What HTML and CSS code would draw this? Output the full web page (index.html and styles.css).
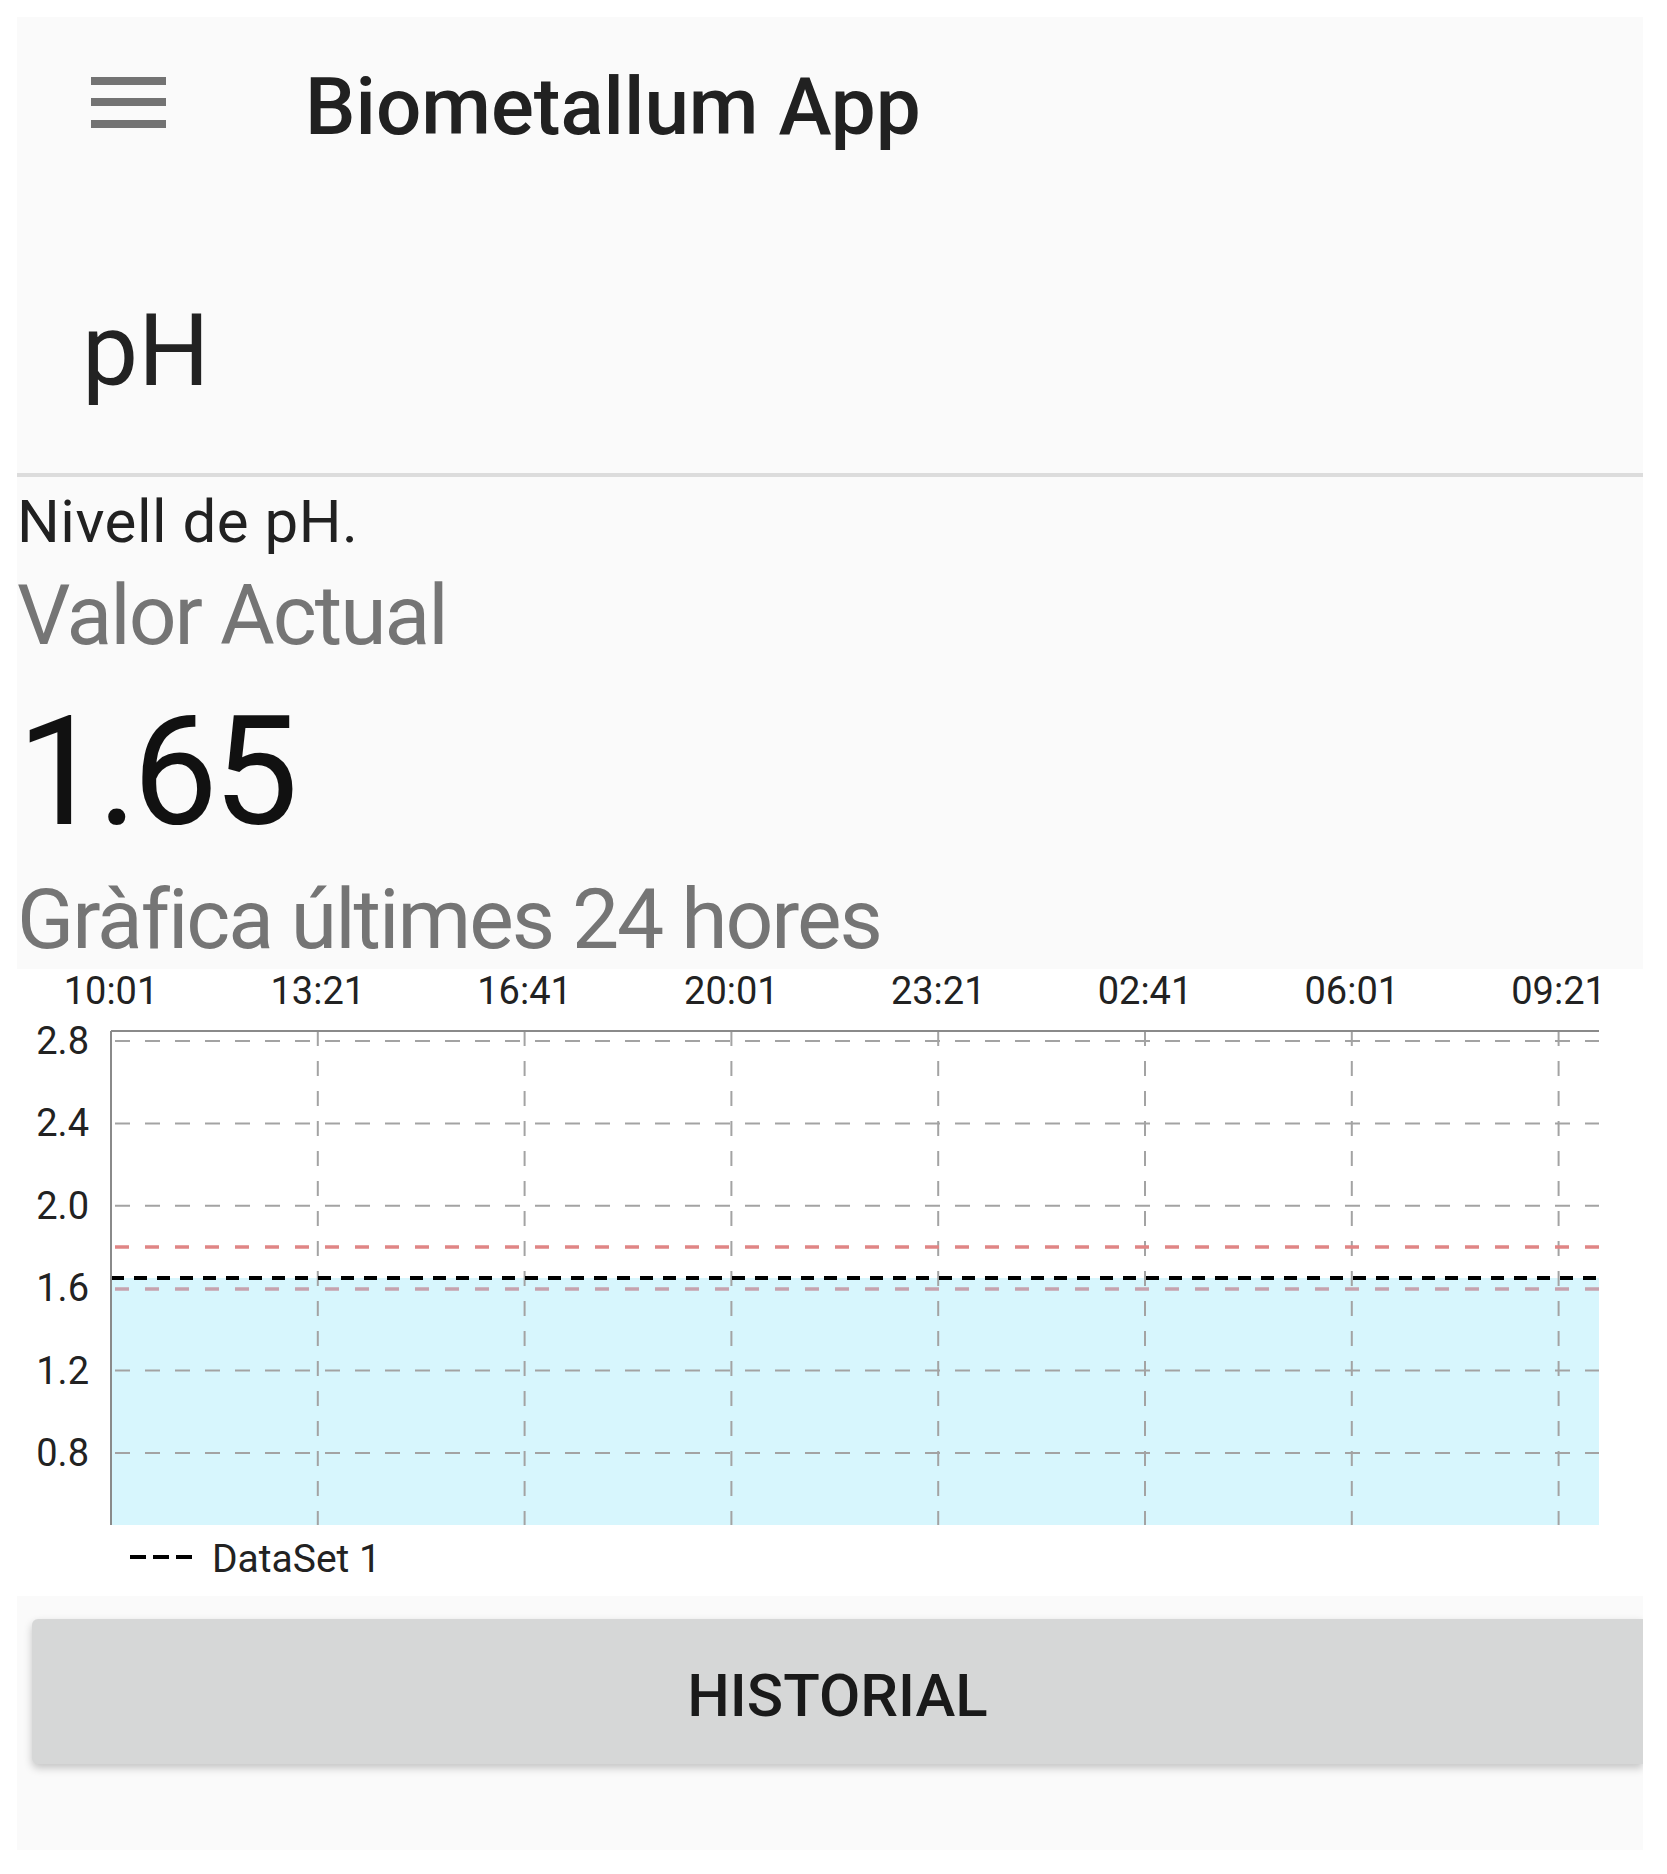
FILE: index.html
```html
<!DOCTYPE html>
<html lang="ca">
<head>
    <meta charset="UTF-8">
    <meta name="viewport" content="width=device-width, initial-scale=1.0">
    <title>Biometallum App</title>
    <link rel="stylesheet" href="styles.css">
</head>
<body>
    <div class="screen">
        <div class="toolbar">
            <svg class="menu-icon" width="75" height="51" viewBox="0 0 75 51">
                <rect x="0" y="0" width="75" height="8" fill="#737373"/>
                <rect x="0" y="21" width="75" height="8" fill="#737373"/>
                <rect x="0" y="43" width="75" height="8" fill="#737373"/>
            </svg>
            <div class="app-title">Biometallum App</div>
        </div>
        <div class="page-title">pH</div>
        <div class="divider"></div>
        <div class="info">
            <div class="description">Nivell de pH.</div>
            <div class="label">Valor Actual</div>
            <div class="value">1.65</div>
            <div class="label">Gràfica últimes 24 hores</div>
        </div>
        <div class="chart">
            <svg width="1626" height="627" viewBox="0 0 1626 627">
                <!-- area under the data set -->
                <rect x="94" y="309" width="1488" height="247" fill="#d7f6fd"/>
                <!-- horizontal grid -->
                <g stroke="#a3a3a3" stroke-width="2" stroke-dasharray="15 15">
                    <line x1="98" y1="72" x2="1582" y2="72"/>
                    <line x1="98" y1="154.4" x2="1582" y2="154.4"/>
                    <line x1="98" y1="236.8" x2="1582" y2="236.8"/>
                    <line x1="98" y1="401.6" x2="1582" y2="401.6"/>
                    <line x1="98" y1="484" x2="1582" y2="484"/>
                </g>
                <!-- vertical grid -->
                <g stroke="#a3a3a3" stroke-width="2" stroke-dasharray="15 15">
                    <line x1="300.8" y1="62" x2="300.8" y2="556"/>
                    <line x1="507.6" y1="62" x2="507.6" y2="556"/>
                    <line x1="714.4" y1="62" x2="714.4" y2="556"/>
                    <line x1="921.2" y1="62" x2="921.2" y2="556"/>
                    <line x1="1128" y1="62" x2="1128" y2="556"/>
                    <line x1="1334.8" y1="62" x2="1334.8" y2="556"/>
                    <line x1="1541.6" y1="62" x2="1541.6" y2="556"/>
                </g>
                <!-- limit lines -->
                <line x1="98" y1="278" x2="1582" y2="278" stroke="#e08585" stroke-width="3.5" stroke-dasharray="14 16"/>
                <line x1="98" y1="320" x2="1582" y2="320" stroke="#c6a2ad" stroke-width="3.5" stroke-dasharray="14 16"/>
                <!-- data set -->
                <line x1="94" y1="309" x2="1582" y2="309" stroke="#000" stroke-width="4" stroke-dasharray="13 10"/>
                <!-- axes -->
                <line x1="94" y1="62" x2="1582" y2="62" stroke="#8a8a8a" stroke-width="2"/>
                <line x1="94" y1="62" x2="94" y2="556" stroke="#8a8a8a" stroke-width="2"/>
                <g class="axis-text" text-anchor="middle">
                    <text x="94" y="35">10:01</text>
                    <text x="300.8" y="35">13:21</text>
                    <text x="507.6" y="35">16:41</text>
                    <text x="714.4" y="35">20:01</text>
                    <text x="921.2" y="35">23:21</text>
                    <text x="1128" y="35">02:41</text>
                    <text x="1334.8" y="35">06:01</text>
                    <text x="1541.6" y="35">09:21</text>
                </g>
                <g class="axis-text" text-anchor="end">
                    <text x="72" y="85">2.8</text>
                    <text x="72" y="167.4">2.4</text>
                    <text x="72" y="249.8">2.0</text>
                    <text x="72" y="332.2">1.6</text>
                    <text x="72" y="414.6">1.2</text>
                    <text x="72" y="497">0.8</text>
                </g>
                <!-- legend -->
                <g stroke="#000" stroke-width="4">
                    <line x1="113" y1="588" x2="129" y2="588"/>
                    <line x1="136" y1="588" x2="152" y2="588"/>
                    <line x1="159" y1="588" x2="175" y2="588"/>
                </g>
                <text class="legend-text" x="195" y="603">DataSet 1</text>
            </svg>
        </div>
        <button type="button" class="history-btn">HISTORIAL</button>
    </div>
</body>
</html>
```

FILE: styles.css
```css
body {
    margin: 0;
    padding: 0;
    background-color: #ffffff;
    font-family: Roboto, "Noto Sans", sans-serif;
    color: #212121;
}
.screen {
    margin: 17px 24px 24px 17px;
    width: 1626px;
    height: 1833px;
    background-color: #fafafa;
    overflow: hidden;
}
.toolbar {
    display: flex;
    align-items: flex-start;
    height: 176px;
}
.menu-icon {
    margin-top: 60px;
    margin-left: 74px;
    flex-shrink: 0;
}
.app-title {
    margin-top: 43px;
    margin-left: 139px;
    font-size: 80px;
    line-height: 94px;
    font-weight: 500;
    color: #212121;
}
.page-title {
    height: 280px;
    box-sizing: border-box;
    padding-top: 98px;
    padding-left: 65px;
    font-size: 100px;
    line-height: 120px;
    color: #222222;
}
.divider {
    height: 4px;
    background-color: #dcdcdc;
}
.info {
    padding-top: 10px;
    padding-left: 0;
}
.description {
    font-size: 60px;
    line-height: 70px;
    letter-spacing: 0.5px;
    color: #212121;
}
.label {
    margin-top: 10px;
    font-size: 84px;
    line-height: 98px;
    letter-spacing: -2px;
    color: #757575;
}
.value {
    margin-top: 18px;
    font-size: 152px;
    line-height: 178px;
    letter-spacing: -5px;
    color: #111111;
}
.chart {
    background-color: #ffffff;
    height: 627px;
}
.chart svg {
    display: block;
}
.axis-text {
    font-family: Roboto, "Noto Sans", sans-serif;
    font-size: 38px;
    fill: #222222;
}
.legend-text {
    font-family: Roboto, "Noto Sans", sans-serif;
    font-size: 39px;
    fill: #222222;
}
.history-btn {
    display: block;
    margin-top: 23px;
    margin-left: 15px;
    width: 1611px;
    height: 145px;
    border: none;
    border-radius: 6px 0 0 6px;
    background-color: #d6d7d7;
    box-shadow: 0 4px 8px rgba(0, 0, 0, 0.22);
    font-family: Roboto, "Noto Sans", sans-serif;
    font-size: 60px;
    font-weight: 500;
    color: #1a1a1a;
    padding: 8px 0 0 0;
}
```
